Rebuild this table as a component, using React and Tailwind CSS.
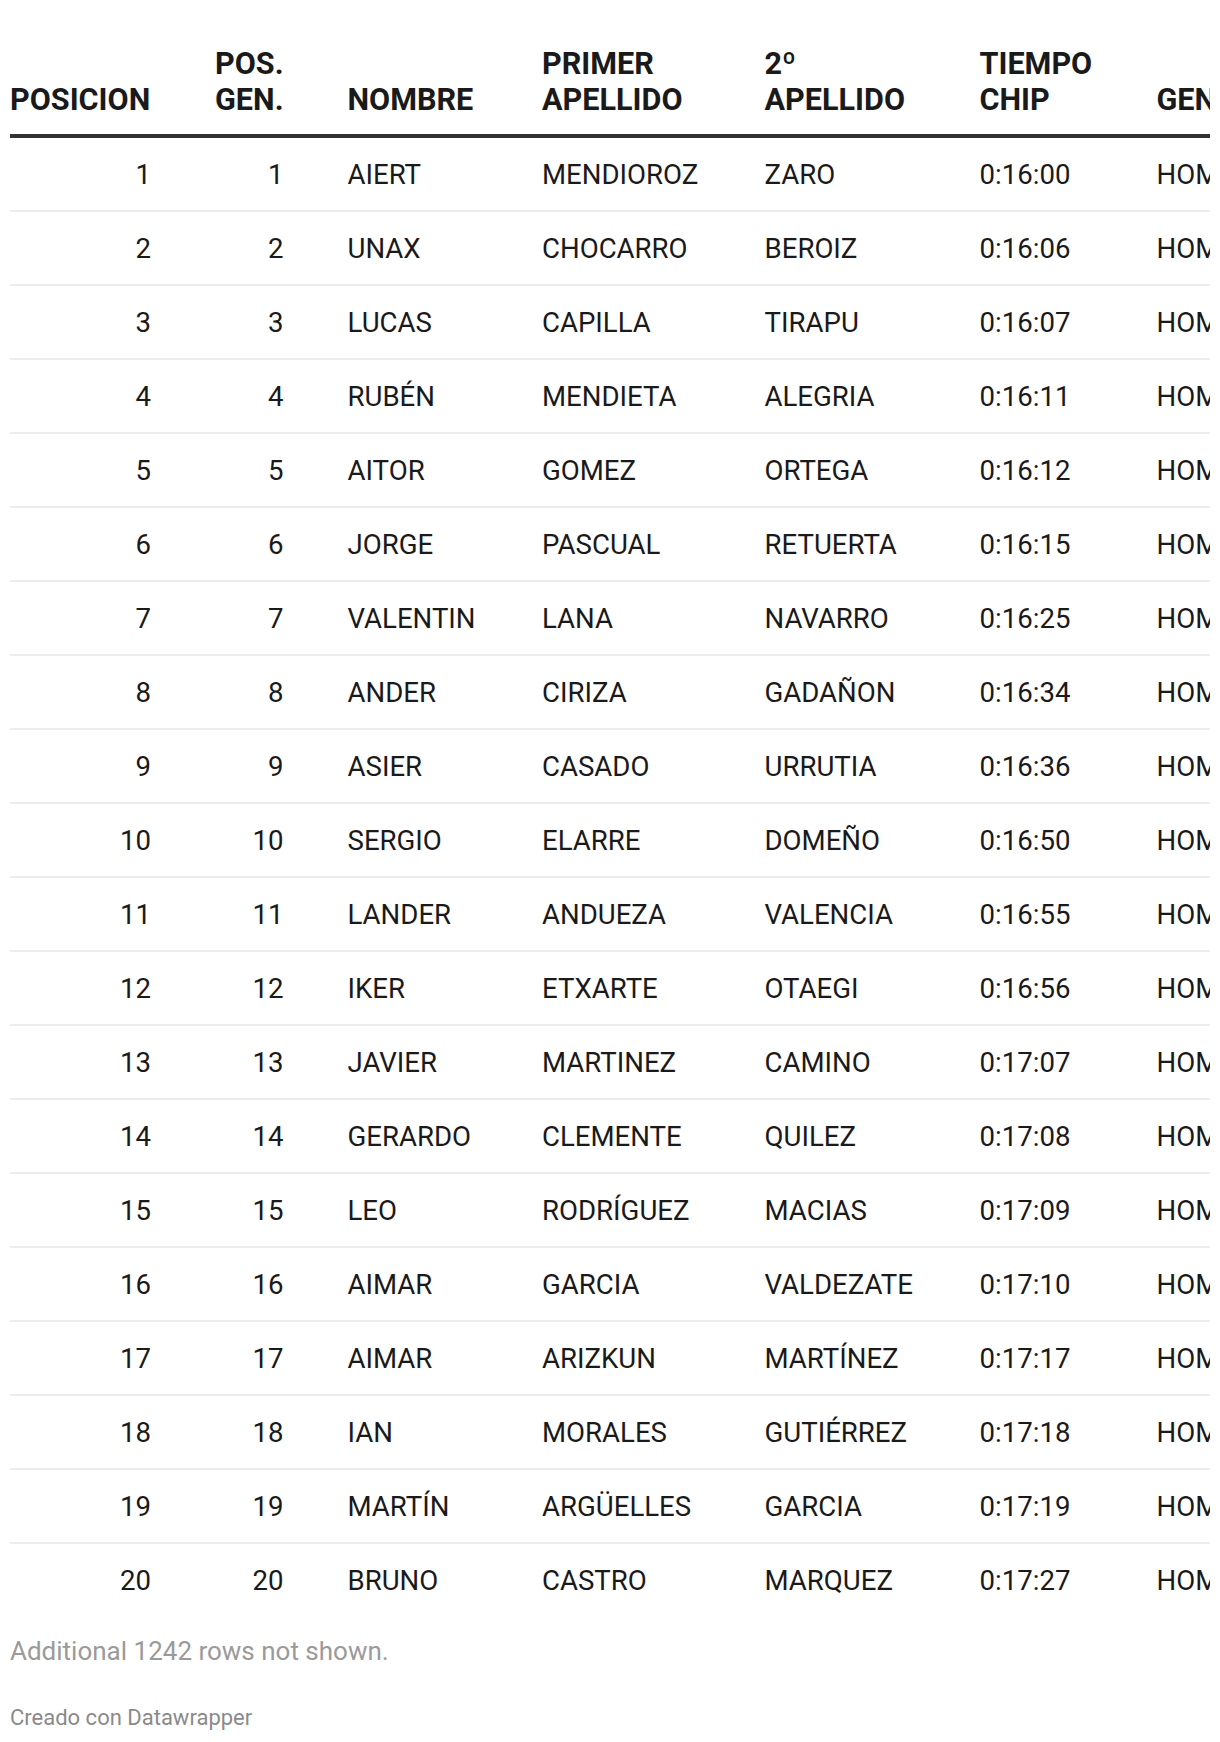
import React from 'react';

const rows = [
  [1, 1, 'AIERT', 'MENDIOROZ', 'ZARO', '0:16:00'],
  [2, 2, 'UNAX', 'CHOCARRO', 'BEROIZ', '0:16:06'],
  [3, 3, 'LUCAS', 'CAPILLA', 'TIRAPU', '0:16:07'],
  [4, 4, 'RUBÉN', 'MENDIETA', 'ALEGRIA', '0:16:11'],
  [5, 5, 'AITOR', 'GOMEZ', 'ORTEGA', '0:16:12'],
  [6, 6, 'JORGE', 'PASCUAL', 'RETUERTA', '0:16:15'],
  [7, 7, 'VALENTIN', 'LANA', 'NAVARRO', '0:16:25'],
  [8, 8, 'ANDER', 'CIRIZA', 'GADAÑON', '0:16:34'],
  [9, 9, 'ASIER', 'CASADO', 'URRUTIA', '0:16:36'],
  [10, 10, 'SERGIO', 'ELARRE', 'DOMEÑO', '0:16:50'],
  [11, 11, 'LANDER', 'ANDUEZA', 'VALENCIA', '0:16:55'],
  [12, 12, 'IKER', 'ETXARTE', 'OTAEGI', '0:16:56'],
  [13, 13, 'JAVIER', 'MARTINEZ', 'CAMINO', '0:17:07'],
  [14, 14, 'GERARDO', 'CLEMENTE', 'QUILEZ', '0:17:08'],
  [15, 15, 'LEO', 'RODRÍGUEZ', 'MACIAS', '0:17:09'],
  [16, 16, 'AIMAR', 'GARCIA', 'VALDEZATE', '0:17:10'],
  [17, 17, 'AIMAR', 'ARIZKUN', 'MARTÍNEZ', '0:17:17'],
  [18, 18, 'IAN', 'MORALES', 'GUTIÉRREZ', '0:17:18'],
  [19, 19, 'MARTÍN', 'ARGÜELLES', 'GARCIA', '0:17:19'],
  [20, 20, 'BRUNO', 'CASTRO', 'MARQUEZ', '0:17:27'],
];

function App() {
  const th = 'align-bottom font-bold text-[30.6px] leading-[36px] pb-[16px] px-[33px] border-b-4 border-[#333333]';

  return (
    <div className="min-h-screen bg-white px-[10px] pt-[46px] font-['Roboto',sans-serif] text-[#1a1a1a]">
      <div className="overflow-hidden">
        <table className="border-separate border-spacing-0 whitespace-nowrap">
          <thead>
            <tr>
              <th className={th + ' !pl-0 text-right'}>
                <div className="w-[139px]">POSICION</div>
              </th>
              <th className={th + ' text-right'}>
                <div className="w-[66.5px]">POS.<br />GEN.</div>
              </th>
              <th className={th + ' text-left'}>
                <div className="w-[128.5px]">NOMBRE</div>
              </th>
              <th className={th + ' text-left'}>
                <div className="w-[156.5px]">PRIMER<br />APELLIDO</div>
              </th>
              <th className={th + ' text-left'}>
                <div className="w-[149px]">2º<br />APELLIDO</div>
              </th>
              <th className={th + ' text-left'}>
                <div className="w-[111px]">TIEMPO<br />CHIP</div>
              </th>
              <th className={th + ' text-left'}>
                <div className="w-[130px]">GENERO</div>
              </th>
            </tr>
          </thead>
          <tbody>
            {rows.map((r, i) => {
              const last = i === rows.length - 1;
              const td =
                'text-[27.6px] leading-[32px] pt-[21px] pb-[19px] px-[33px] ' +
                (last ? 'border-b-0' : 'border-b-2 border-[#ededed]');
              return (
                <tr key={i}>
                  <td className={td + ' !pl-0 !pr-[31px] text-right'}>{r[0]}</td>
                  <td className={td + ' !pr-[31px] text-right'}>{r[1]}</td>
                  <td className={td}>{r[2]}</td>
                  <td className={td}>{r[3]}</td>
                  <td className={td}>{r[4]}</td>
                  <td className={td}>{r[5]}</td>
                  <td className={td}>HOMBRE</td>
                </tr>
              );
            })}
          </tbody>
        </table>
      </div>

      <p className="mt-[17px] text-[26px] leading-[36px] text-[#9a9a9a]">Additional 1242 rows not shown.</p>
      <p className="mt-[34px] text-[22px] leading-[30px] text-[#8a8a8a]">Creado con Datawrapper</p>
    </div>
  );
}

export default App;
